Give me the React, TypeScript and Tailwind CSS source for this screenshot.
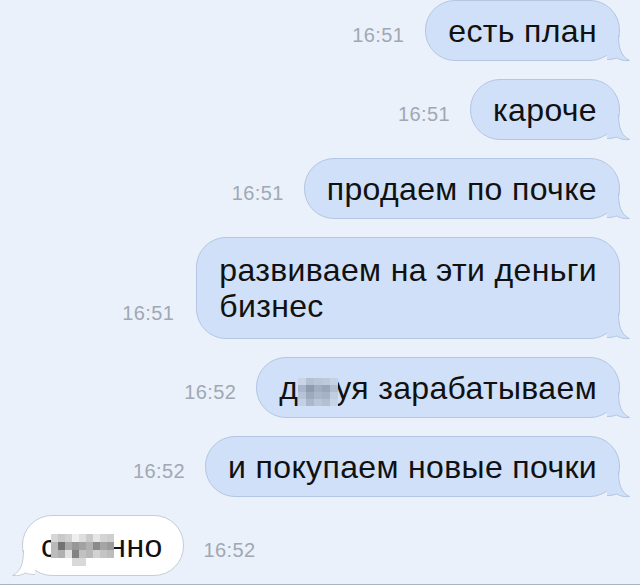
import { FC, ReactNode } from 'react';

type Side = 'out' | 'in';

const outFill = '#cfe0f8';
const outStroke = '#b3c6e2';
const inFill = '#ffffff';
const inStroke = '#c6cdd8';

// little tail at the bottom corner of a bubble
const Tail: FC<{ side: Side }> = ({ side }) => {
  const fill = side === 'out' ? outFill : inFill;
  const stroke = side === 'out' ? outStroke : inStroke;
  return (
    <svg
      width="24"
      height="30"
      viewBox="0 0 24 30"
      className={
        side === 'out'
          ? 'absolute right-[-12px] bottom-[-3px]'
          : 'absolute left-[-12px] bottom-[-3px] -scale-x-100'
      }
    >
      <path
        d="M11.5 0 L11.5 2 C11.5 15 14 23.5 22.5 27.5 C17 28.2 13 26.8 9.5 25 C7 26 4 26.5 0 26.5 L0 0 Z"
        fill={fill}
      />
      <path
        d="M11.5 2 C11.5 15 14 23.5 22.5 27.5 C17 28.2 13 26.8 9.5 25 C7 26 4 26.5 0 26.5"
        fill="none"
        stroke={stroke}
        strokeWidth="1"
      />
    </svg>
  );
};

const Bubble: FC<{ side: Side; tall?: boolean; children: ReactNode }> = ({
  side,
  tall,
  children,
}) => (
  <div
    className={
      'relative rounded-[30px] border leading-[36px] text-[32px] tracking-[0.35px] text-[#111111] ' +
      (tall ? 'py-[14px] ' : 'py-[11.5px] ') +
      (side === 'out'
        ? 'px-[22px] bg-[#cfe0f8] border-[#b3c6e2]'
        : 'pl-[18px] pr-[20px] bg-white border-[#c6cdd8]')
    }
  >
    <span className="relative z-10">{children}</span>
    <Tail side={side} />
  </div>
);

const Time: FC<{ value: string }> = ({ value }) => (
  <span className="mb-[14px] text-[20px] leading-[24px] tracking-[0.4px] text-[#a0a8b4]">
    {value}
  </span>
);

// mosaic over the censored letters, hung from the text baseline
const Mosaic: FC<{
  cols: number;
  cell: [number, number];
  colors: string[];
  top: number;
  width: number;
  overlap?: number;
}> = ({ cols, cell, colors, top, width, overlap = 0 }) => (
  <span
    className="relative inline-block h-[1px] align-baseline"
    style={{ width: width - overlap, marginLeft: overlap ? -overlap : 0 }}
  >
    <span
      className="absolute left-0 grid"
      style={{
        top,
        gridTemplateColumns: `repeat(${cols}, ${cell[0]}px)`,
        gridAutoRows: `${cell[1]}px`,
      }}
    >
      {colors.map((c, i) => (
        <span key={i} style={{ backgroundColor: c }} />
      ))}
    </span>
  </span>
);

const blueMosaic = [
  '#c9d4e6', '#b4c0d4', '#b9c5d9', '#bdc9dc', '#c6d1e4',
  '#a9b5c9', '#8f9bb0', '#a1adc1', '#99a5b9', '#b1bdd1',
  '#b6c2d6', '#9da9bd', '#a9b5c9', '#a5b1c5', '#c0cce0',
  '#c4d0e3', '#abb7cb', '#b9c5d8', '#b3bfd3', '#c8d3e6',
];

const grayMosaic = [
  '#d6d6d6', '#c9c9c9', '#d2d2d2', '#efefef', '#dedede', '#cacaca', '#e6e6e6', '#d4d4d4', '#cfcfcf',
  '#b9b9b9', '#737373', '#a9a9a9', '#979797', '#a2a2a2', '#b1b1b1', '#8a8a8a', '#a5a5a5', '#9b9b9b',
  '#bcbcbc', '#b0b0b0', '#e2e2e2', '#838383', '#c1c1c1', '#b8b8b8', '#d2d2d2', '#c4c4c4', '#bdbdbd',
  'transparent', 'transparent', 'transparent', '#d9d9d9', '#d9d9d9', 'transparent', 'transparent', 'transparent', 'transparent',
];

export default function App() {
  return (
    <div
      className="flex h-[587px] w-[640px] flex-col overflow-hidden bg-[#ebf1fa]"
      style={{ fontFamily: '"Liberation Sans", Arial, sans-serif' }}
    >
      <div className="flex flex-1 flex-col gap-[18px]">
        <div className="flex items-end justify-end gap-[21px] pr-[20px]">
          <Time value="16:51" />
          <Bubble side="out">есть план</Bubble>
        </div>
        <div className="flex items-end justify-end gap-[20px] pr-[20px]">
          <Time value="16:51" />
          <Bubble side="out">кароче</Bubble>
        </div>
        <div className="flex items-end justify-end gap-[20px] pr-[20px]">
          <Time value="16:51" />
          <Bubble side="out">продаем по почке</Bubble>
        </div>
        <div className="flex items-end justify-end gap-[22px] pr-[20px]">
          <Time value="16:51" />
          <Bubble side="out" tall>
            развиваем на эти деньги
            <br />
            бизнес
          </Bubble>
        </div>
        <div className="flex items-end justify-end gap-[20px] pr-[20px]">
          <Time value="16:52" />
          <Bubble side="out">
            д
            <Mosaic cols={5} cell={[8, 7]} colors={blueMosaic} top={-20} width={37} />
            уя зарабатываем
          </Bubble>
        </div>
        <div className="flex items-end justify-end gap-[20px] pr-[20px]">
          <Time value="16:52" />
          <Bubble side="out">и покупаем новые почки</Bubble>
        </div>
        <div className="flex items-end justify-start gap-[20px] pl-[22px]">
          <Bubble side="in">
            с
            <Mosaic cols={9} cell={[7, 8]} colors={grayMosaic} top={-22} width={63} overlap={6} />
            нно
          </Bubble>
          <Time value="16:52" />
        </div>
      </div>
      <div className="h-[3px] border-t border-[#a9b3c3] bg-white" />
    </div>
  );
}
